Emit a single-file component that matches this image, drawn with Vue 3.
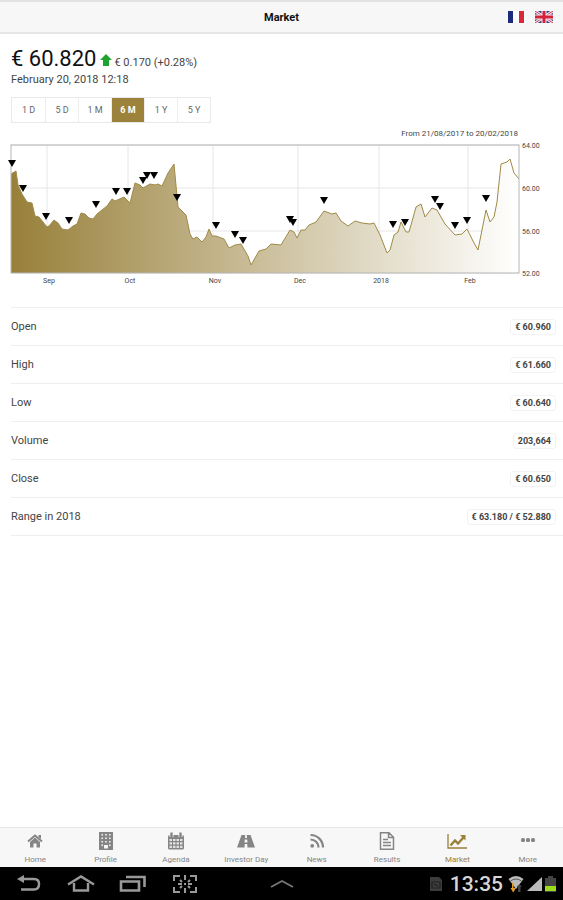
<script setup>
import { computed, ref } from 'vue'

const periods = ['1 D', '5 D', '1 M', '6 M', '1 Y', '5 Y']
const period = ref('6 M')

const rows = [
  { label: 'Open', value: '€ 60.960' },
  { label: 'High', value: '€ 61.660' },
  { label: 'Low', value: '€ 60.640' },
  { label: 'Volume', value: '203,664' },
  { label: 'Close', value: '€ 60.650' },
  { label: 'Range in 2018', value: '€ 63.180 / € 52.880' },
]

const tabs = [
  { id: 'home', label: 'Home' },
  { id: 'profile', label: 'Profile' },
  { id: 'agenda', label: 'Agenda' },
  { id: 'investor', label: 'Investor Day' },
  { id: 'news', label: 'News' },
  { id: 'results', label: 'Results' },
  { id: 'market', label: 'Market' },
  { id: 'more', label: 'More' },
]
const activeTab = ref('market')

// Chart box, in viewBox units
const plot = { left: 0, right: 508, top: 20, bottom: 148 }

const series = [
  [0, 49], [5, 46], [7, 60], [11, 69], [16, 77], [21, 78], [24, 91], [28, 92], [32, 97], [36, 102],
  [38, 101], [43, 95], [47, 98], [51, 104], [57, 105], [62, 101], [66, 99], [70, 88], [74, 89],
  [78, 93], [82, 94], [86, 89], [96, 81], [101, 74], [104, 76], [113, 72], [119, 78], [124, 58],
  [129, 60], [132, 63], [139, 59], [144, 60], [147, 59], [151, 61], [157, 48], [163, 39], [167, 82],
  [171, 86], [175, 90], [179, 109], [182, 114], [186, 112], [191, 117], [195, 112], [198, 104],
  [201, 111], [205, 111], [213, 114], [218, 123], [224, 120], [230, 119], [237, 131], [240, 140],
  [248, 126], [255, 124], [260, 119], [270, 120], [279, 105], [283, 107], [286, 113], [290, 105],
  [294, 105], [298, 100], [305, 97], [313, 86], [321, 89], [325, 88], [330, 96], [337, 101],
  [344, 96], [351, 98], [359, 99], [363, 98], [369, 110], [376, 128], [379, 125], [383, 110],
  [387, 107], [390, 97], [395, 107], [398, 107], [405, 82], [410, 79], [414, 92], [421, 83],
  [426, 85], [434, 99], [444, 110], [451, 109], [456, 104], [463, 118], [467, 125], [475, 85],
  [479, 97], [483, 92], [486, 77], [490, 39], [496, 37], [499, 34], [503, 48], [508, 54],
]

// News markers
const markers = [
  [1, 38], [12, 63], [35, 91], [58, 95], [85, 79], [105, 66], [116, 66], [132, 55], [136, 50],
  [143, 50], [166, 72], [205, 100], [224, 109], [232, 115], [279, 94], [282, 97], [313, 75],
  [382, 99], [394, 97], [424, 74], [429, 81], [444, 100], [456, 95], [475, 73],
]

const months = [
  { label: 'Sep', x: 36 },
  { label: 'Oct', x: 117 },
  { label: 'Nov', x: 202 },
  { label: 'Dec', x: 287 },
  { label: '2018', x: 368 },
  { label: 'Feb', x: 457 },
]
const levels = [
  { label: '64.00', y: 20 },
  { label: '60.00', y: 63 },
  { label: '56.00', y: 106 },
  { label: '52.00', y: 148 },
]

const linePath = computed(() => 'M' + series.map((p) => p.join(' ')).join('L'))
const areaPath = computed(
  () => `${linePath.value}L${plot.right} ${plot.bottom}L${plot.left} ${plot.bottom}Z`
)
</script>

<template>
  <div class="app">
    <header class="topbar">
      <h1 class="topbar__title">Market</h1>
      <div class="topbar__langs">
        <button type="button" class="flag" aria-label="Français">
          <svg viewBox="0 0 18 12" width="18" height="12">
            <rect width="18" height="12" fill="#fbfbfd" />
            <rect x="1" width="5" height="12" fill="#1c2a7c" />
            <rect x="12" width="5" height="12" fill="#d8283a" />
          </svg>
        </button>
        <button type="button" class="flag" aria-label="English">
          <svg viewBox="0 0 18 12" width="18" height="12">
            <rect width="18" height="12" fill="#34408c" />
            <path d="M0 0L18 12M18 0L0 12" stroke="#f3e9f0" stroke-width="3" />
            <path d="M0 0L18 12M18 0L0 12" stroke="#d23a50" stroke-width="1" />
            <path d="M9 0V12M0 6H18" stroke="#f7eef2" stroke-width="5" />
            <path d="M9 0V12M0 6H18" stroke="#d4213a" stroke-width="3" />
          </svg>
        </button>
      </div>
    </header>

    <main class="content">
      <section class="quote">
        <div class="quote__line">
          <span class="quote__price">€ 60.820</span>
          <svg class="quote__arrow" viewBox="0 0 12 12" width="12" height="12">
            <path d="M6 0L12 6H9V12H3V6H0Z" fill="#1fa32e" />
          </svg>
          <span class="quote__change">€ 0.170 (+0.28%)</span>
        </div>
        <p class="quote__date">February 20, 2018 12:18</p>
      </section>

      <div class="periods">
        <button
          v-for="p in periods"
          :key="p"
          type="button"
          class="period"
          :class="{ 'period--active': p === period }"
          @click="period = p"
        >
          {{ p }}
        </button>
      </div>

      <svg class="chart" viewBox="0 0 552 164" role="img" aria-label="Share price, last 6 months">
        <defs>
          <linearGradient id="area" x1="0" y1="0" x2="1" y2="0">
            <stop offset="0" stop-color="#98803a" />
            <stop offset="1" stop-color="#ffffff" />
          </linearGradient>
        </defs>
        <text class="chart__range" x="507" y="11" text-anchor="end">From 21/08/2017 to 20/02/2018</text>
        <line
          v-for="m in months"
          :key="m.label"
          class="chart__grid"
          :x1="m.x"
          :x2="m.x"
          :y1="plot.top"
          :y2="plot.bottom"
        />
        <line
          v-for="l in levels"
          :key="l.label"
          class="chart__grid"
          :x1="plot.left"
          :x2="plot.right"
          :y1="l.y"
          :y2="l.y"
        />
        <path :d="areaPath" fill="url(#area)" />
        <path :d="linePath" class="chart__line" />
        <rect class="chart__frame" :x="plot.left" :y="plot.top" :width="plot.right" :height="plot.bottom - plot.top" />
        <path
          v-for="(m, i) in markers"
          :key="i"
          :d="`M${m[0] - 4} ${m[1] - 3}h8l-4 7z`"
          fill="#000"
        />
        <text v-for="m in months" :key="m.label" class="chart__label" :x="m.x + 2" y="158" text-anchor="middle">
          {{ m.label }}
        </text>
        <text v-for="l in levels" :key="l.label" class="chart__label" x="511" :y="l.y + 3">{{ l.label }}</text>
      </svg>

      <dl class="rows">
        <div v-for="r in rows" :key="r.label" class="row">
          <dt class="row__label">{{ r.label }}</dt>
          <dd class="row__value">{{ r.value }}</dd>
        </div>
      </dl>
    </main>

    <nav class="tabs">
      <a
        v-for="t in tabs"
        :key="t.id"
        :href="`#${t.id}`"
        class="tab"
        :class="{ 'tab--active': t.id === activeTab }"
        @click.prevent="activeTab = t.id"
      >
        <svg class="tab__icon" viewBox="0 0 20 18" width="20" height="18">
          <template v-if="t.id === 'home'">
            <path d="M3 9.500L10 3.500L17 9.500" fill="none" stroke="currentColor" stroke-width="2" />
            <path d="M13.500 3h2.500v4L13.500 5z" fill="currentColor" />
            <path d="M5 10L10 5.500L15 10V15.500H11.500V11.500H8.500V15.500H5Z" fill="currentColor" />
          </template>
          <template v-else-if="t.id === 'profile'">
            <path
              fill="currentColor"
              fill-rule="evenodd"
              d="M3 0H17V18H3ZM5.500 2V3.500H7V2ZM9.200 2V3.500H10.800V2ZM13 2V3.500H14.500V2ZM5.500 5.500V7H7V5.500ZM9.200 5.500V7H10.800V5.500ZM13 5.500V7H14.500V5.500ZM5.500 9V10.500H7V9ZM9.200 9V10.500H10.800V9ZM13 9V10.500H14.500V9ZM5.500 12.500V14H7V12.500ZM13 12.500V14H14.500V12.500ZM8 13V16.500H12V13Z"
            />
          </template>
          <template v-else-if="t.id === 'agenda'">
            <rect x="2" y="3" width="16" height="14.500" rx="1.500" fill="currentColor" />
            <path d="M5.500 0.500V5M14.500 0.500V5" stroke="#f7f7f7" stroke-width="4" />
            <path d="M5.500 0.500V5M14.500 0.500V5" stroke="currentColor" stroke-width="2.400" />
            <path
              d="M3.500 7H6V9H3.500ZM7 7H9.500V9H7ZM10.500 7H13V9H10.500ZM14 7H16.500V9H14ZM3.500 10.200H6V12.500H3.500ZM7 10.200H9.500V12.500H7ZM10.500 10.200H13V12.500H10.500ZM14 10.200H16.500V12.500H14ZM3.500 13.700H6V16H3.500ZM7 13.700H9.500V16H7ZM10.500 13.700H13V16H10.500ZM14 13.700H16.500V16H14Z"
              fill="#e2e2e2"
            />
          </template>
          <template v-else-if="t.id === 'investor'">
            <path
              fill="currentColor"
              fill-rule="evenodd"
              d="M5.500 3H14.500L19 15.500H11.500L11.200 12H8.800L8.500 15.500H1ZM9.200 3L9 6H11L10.800 3ZM8.800 7.500L8.500 10.500H11.500L11.200 7.500Z"
            />
          </template>
          <template v-else-if="t.id === 'news'">
            <circle cx="5.200" cy="13.800" r="1.900" fill="currentColor" />
            <path
              d="M3.500 7.500C8 7.500 11.500 11 11.500 15.500M3.500 3C10.500 3 16 8.500 16 15.500"
              fill="none"
              stroke="currentColor"
              stroke-width="2.200"
            />
          </template>
          <template v-else-if="t.id === 'results'">
            <path
              d="M3.500 0.800H12L16.500 5.200V17.200H3.500ZM11.500 1V5.500H16.500M6 7.500H11M6 10.500H14M6 13.500H14"
              fill="none"
              stroke="currentColor"
              stroke-width="1.500"
            />
          </template>
          <template v-else-if="t.id === 'market'">
            <path d="M1 2V16H20" fill="none" stroke="currentColor" stroke-width="1.300" />
            <path d="M3.500 13.500L8 8.500L11 11.500L16.500 5.500" fill="none" stroke="currentColor" stroke-width="2.400" />
            <path d="M13 3H18.500V8.500Z" fill="currentColor" />
          </template>
          <template v-else>
            <rect x="3" y="6" width="4" height="4" rx="1.500" fill="currentColor" />
            <rect x="8" y="6" width="4" height="4" rx="1.500" fill="currentColor" />
            <rect x="13" y="6" width="4" height="4" rx="1.500" fill="currentColor" />
          </template>
        </svg>
        <span class="tab__label">{{ t.label }}</span>
      </a>
    </nav>

    <footer class="sysbar">
      <div class="sysbar__nav">
        <button type="button" class="sysbtn" aria-label="Back">
          <svg viewBox="0 0 28 20" width="28" height="20">
            <path d="M8 5H19Q24 5 24 10Q24 15.500 19 15.500H6" fill="none" stroke="#999" stroke-width="2.500" />
            <path d="M2 5L9 1V9Z" fill="#999" />
          </svg>
        </button>
        <button type="button" class="sysbtn" aria-label="Home">
          <svg viewBox="0 0 28 20" width="28" height="20">
            <path d="M1 10.500L14 2.500L27 10.500M7 9V16.500H21V9" fill="none" stroke="#999" stroke-width="2.400" />
          </svg>
        </button>
        <button type="button" class="sysbtn" aria-label="Recent apps">
          <svg viewBox="0 0 28 20" width="28" height="20">
            <path d="M2 7.500H20V16.500H2ZM7 3H25.500V13" fill="none" stroke="#999" stroke-width="2.600" />
          </svg>
        </button>
        <button type="button" class="sysbtn" aria-label="Screenshot">
          <svg viewBox="0 0 28 20" width="28" height="20">
            <path
              d="M3 7V2H9M19 2H25V7M25 13V18H19M9 18H3V13M14 1V6M14 14V19M7 10H11M17 10H21M9 6L11 8M19 6L17 8M9 14L11 12M19 14L17 12M13 10H15"
              fill="none"
              stroke="#999"
              stroke-width="2"
            />
          </svg>
        </button>
      </div>
      <button type="button" class="sysbtn" aria-label="Open tray">
        <svg viewBox="0 0 24 12" width="24" height="12">
          <path d="M1 9L12 3L23 9" fill="none" stroke="#777" stroke-width="1.800" />
        </svg>
      </button>
      <div class="sysbar__status">
        <svg class="sysbar__card" viewBox="0 0 12 14" width="12" height="14">
          <path d="M0 0H9L12 3V14H0Z" fill="#3c3c3c" />
          <path d="M2 5H10V11H2ZM4 7L8 9" fill="none" stroke="#222" stroke-width="1.200" />
        </svg>
        <time class="sysbar__time">13:35</time>
        <svg viewBox="0 0 16 18" width="16" height="18">
          <path d="M0.500 4Q8 -2 15.500 4L8 14Z" fill="#bbb" />
          <path d="M2.500 6Q8 2 13.500 6" fill="none" stroke="#555" stroke-width="1" />
          <path d="M5.500 8V13H8L5.200 17.500L2.500 13H4V8Z" fill="#e59a22" />
          <path d="M10 17V12H8.500L11.500 9L14 12H12.500V17Z" fill="#444" />
        </svg>
        <svg viewBox="0 0 15 14" width="15" height="14">
          <path d="M15 0V14H0Z" fill="#bbb" />
        </svg>
        <svg viewBox="0 0 11 16" width="11" height="16">
          <path d="M3 0H8V2H11V16H0V2H3Z" fill="#444" />
          <path d="M0 10H11V15H0Z" fill="#9bdc1e" />
        </svg>
      </div>
    </footer>
  </div>
</template>

<style>
body {
  background: #fff;
}
</style>

<style scoped>
.app {
  display: flex;
  flex-direction: column;
  min-height: 100vh;
  font-family: Roboto, sans-serif;
  color: #444;
}
button {
  padding: 0;
  border: 0;
  background: none;
  font: inherit;
  cursor: pointer;
}
svg { display: block; }

.topbar {
  display: grid;
  grid-template-columns: 1fr auto 1fr;
  align-items: center;
  height: 34px;
  box-sizing: border-box;
  border-top: 2px solid #e2e2e2;
  border-bottom: 2px solid #e6e6e6;
  background: #f7f7f7;
}
.topbar__title {
  grid-column: 2;
  margin: 0;
  font-size: 11px;
  font-weight: 700;
  color: #111;
}
.topbar__langs {
  display: flex;
  justify-content: flex-end;
  gap: 10px;
  padding-right: 10px;
}

.content {
  flex: 1;
  padding-left: 11px;
}
.quote { padding-top: 11px; }
.quote__line {
  display: flex;
  align-items: baseline;
  height: 27px;
  line-height: 27px;
}
.quote__price {
  font-size: 22px;
  color: #111;
}
.quote__arrow { margin: 0 2px 0 4px; }
.quote__change { font-size: 11px; }
.quote__date {
  margin: 0;
  font-size: 11px;
  line-height: 16px;
}

.periods {
  display: inline-flex;
  margin-top: 9px;
  border: 1px solid #e9e9e9;
  vertical-align: top;
}
.period {
  width: 33px;
  height: 24px;
  font-size: 9px;
  color: #666;
}
.period + .period { border-left: 1px solid #eee; }
.period--active {
  background: #9c823a;
  color: #fff;
  font-weight: 700;
}

.chart {
  width: 100%;
  height: auto;
  margin-top: 2px;
  overflow: visible;
}
.chart__range { font-size: 8px; fill: #444; }
.chart__label { font-size: 7px; fill: #444; }
.chart__grid { stroke: #e6e6e6; }
.chart__line { fill: none; stroke: #a08a48; }
.chart__frame { fill: none; stroke: #b5b5b5; }

.rows {
  margin: 18px 0 0;
  border-top: 1px solid #eee;
}
.row {
  display: flex;
  align-items: center;
  justify-content: space-between;
  height: 37px;
  padding-right: 7px;
  border-bottom: 1px solid #eee;
}
.row__label { font-size: 11px; }
.row__value {
  margin: 0;
  padding: 0 4px;
  border: 1px solid #f3f3f3;
  border-radius: 3px;
  font-size: 9px;
  font-weight: 700;
  line-height: 14px;
}

.tabs {
  display: grid;
  grid-template-columns: repeat(8, 1fr);
  height: 40px;
  box-sizing: border-box;
  border-top: 1px solid #e6e6e6;
  background: #f7f7f7;
}
.tab {
  display: flex;
  flex-direction: column;
  align-items: center;
  gap: 5px;
  padding-top: 4px;
  color: #858585;
  text-decoration: none;
}
.tab--active { color: #98803a; }
.tab__label {
  font-size: 8px;
  line-height: 10px;
}

.sysbar {
  display: grid;
  grid-template-columns: 1fr auto 1fr;
  align-items: center;
  height: 33px;
  background: #000;
}
.sysbar__nav {
  display: flex;
  gap: 24px;
  padding-left: 15px;
}
.sysbar__status {
  display: flex;
  align-items: center;
  justify-content: flex-end;
  gap: 3px;
  padding-right: 7px;
}
.sysbar__card { margin-right: 5px; }
.sysbar__time {
  margin-right: 2px;
  font-size: 21px;
  font-weight: 500;
  line-height: 24px;
  color: #d6d6d6;
}
</style>
